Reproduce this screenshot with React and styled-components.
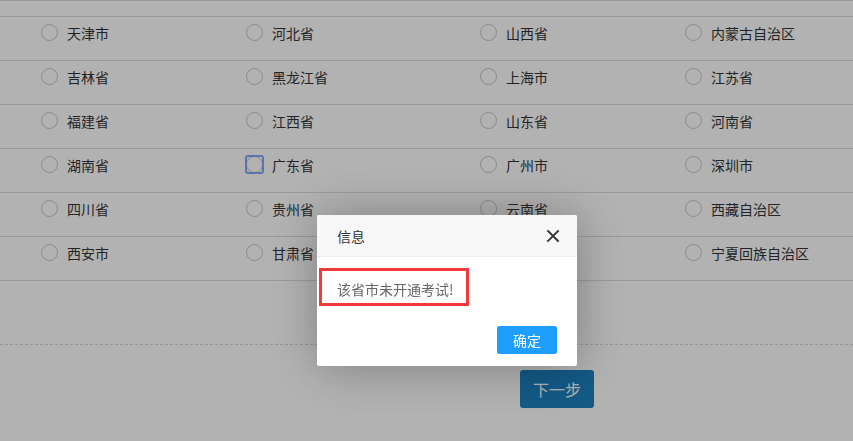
import React from "react";
import styled, { createGlobalStyle } from "styled-components";

const GlobalStyle = createGlobalStyle`
  html, body {
    margin: 0;
    padding: 0;
    background: #fff;
    font-family: "Noto Sans CJK SC", "Noto Sans", sans-serif;
    color: #333;
    overflow: hidden;
  }
`;

const rows = [
  ["天津市", "河北省", "山西省", "内蒙古自治区"],
  ["吉林省", "黑龙江省", "上海市", "江苏省"],
  ["福建省", "江西省", "山东省", "河南省"],
  ["湖南省", "广东省", "广州市", "深圳市"],
  ["四川省", "贵州省", "云南省", "西藏自治区"],
  ["西安市", "甘肃省", "青海省", "宁夏回族自治区"],
];

const App = () => {
  return (
    <>
      <GlobalStyle />
      <Page>
        <ProvinceTable>
          <TopStrip />
          {rows.map((row, r) => (
            <Row key={r} last={r === rows.length - 1}>
              {row.map((name, c) => (
                <Option key={c}>
                  <Radio focused={name === "广东省"} />
                  <span>{name}</span>
                </Option>
              ))}
            </Row>
          ))}
        </ProvinceTable>
        <Divider />
        <Footer>
          <NextButton>下一步</NextButton>
        </Footer>
      </Page>

      <Shade />
      <Dialog>
        <DialogHeader>
          <span>信息</span>
          <CloseBtn aria-label="close">
            <svg width="14" height="14" viewBox="0 0 14 14">
              <path
                d="M2 2 L12 12 M12 2 L2 12"
                stroke="#333"
                strokeWidth="1.8"
                strokeLinecap="square"
              />
            </svg>
          </CloseBtn>
        </DialogHeader>
        <DialogContent>该省市未开通考试!</DialogContent>
        <Annotation />
        <DialogActions>
          <ConfirmBtn>确定</ConfirmBtn>
        </DialogActions>
      </Dialog>
    </>
  );
};

const Page = styled.div`
  width: 853px;
  height: 441px;
  background: #fff;
`;

const ProvinceTable = styled.div`
  display: flex;
  flex-direction: column;
`;

const TopStrip = styled.div`
  height: 15px;
  border-top: 1px solid #ddd;
`;

const Row = styled.div`
  display: grid;
  grid-template-columns: 205px 234px 205px 1fr;
  padding: 6px 0 0 41px;
  height: 37px;
  border-top: 1px solid #ddd;
  border-bottom: ${(p) => (p.last ? "1px solid #ddd" : "none")};
`;

const Option = styled.label`
  display: flex;
  align-items: center;
  height: 19px;
  gap: 9px;
  font-size: 14px;
  color: #333;
  white-space: nowrap;
`;

const Radio = styled.span`
  position: relative;
  flex: none;
  width: 15px;
  height: 15px;
  border: 1px solid #c6c6c6;
  border-radius: 50%;
  background: #fff;

  &::after {
    content: "";
    display: ${(p) => (p.focused ? "block" : "none")};
    position: absolute;
    left: -2px;
    top: -2px;
    width: 15px;
    height: 15px;
    border: 2px solid #7fa9f2;
    border-radius: 3px;
  }
`;

const Divider = styled.div`
  margin-top: 63px;
  border-top: 1px dashed #d6d6d6;
`;

const Footer = styled.div`
  padding: 25px 0 0 520px;
`;

const NextButton = styled.button`
  width: 74px;
  height: 38px;
  border: none;
  border-radius: 3px;
  background: #1c81c1;
  color: #fff;
  font-family: inherit;
  font-size: 16px;
  cursor: pointer;
`;

const Shade = styled.div`
  position: fixed;
  inset: 0;
  background: rgba(0, 0, 0, 0.3);
`;

const Dialog = styled.div`
  position: fixed;
  left: 317px;
  top: 215px;
  width: 260px;
  background: #fff;
  border-radius: 2px;
  box-shadow: 1px 1px 50px rgba(0, 0, 0, 0.3);
`;

const DialogHeader = styled.div`
  display: flex;
  align-items: center;
  justify-content: space-between;
  height: 41px;
  padding: 0 17px 0 20px;
  background: #f8f8f8;
  border-bottom: 1px solid #eee;
  border-radius: 2px 2px 0 0;
  font-size: 14px;
  color: #333;
`;

const CloseBtn = styled.span`
  display: flex;
  width: 14px;
  height: 14px;
  cursor: pointer;
`;

const DialogContent = styled.div`
  padding: 20px;
  line-height: 24px;
  font-size: 14px;
  color: #666;
`;

const Annotation = styled.div`
  position: absolute;
  left: 2px;
  top: 53px;
  width: 144px;
  height: 32px;
  border: 3px solid #f33a3a;
`;

const DialogActions = styled.div`
  display: flex;
  justify-content: flex-end;
  padding: 0 15px 12px;
`;

const ConfirmBtn = styled.button`
  height: 28px;
  margin: 5px 5px 0;
  padding: 0 15px;
  border: 1px solid #1e9fff;
  border-radius: 2px;
  background: #1e9fff;
  color: #fff;
  font-family: inherit;
  font-size: 14px;
  line-height: 26px;
  cursor: pointer;
`;

export default App;
